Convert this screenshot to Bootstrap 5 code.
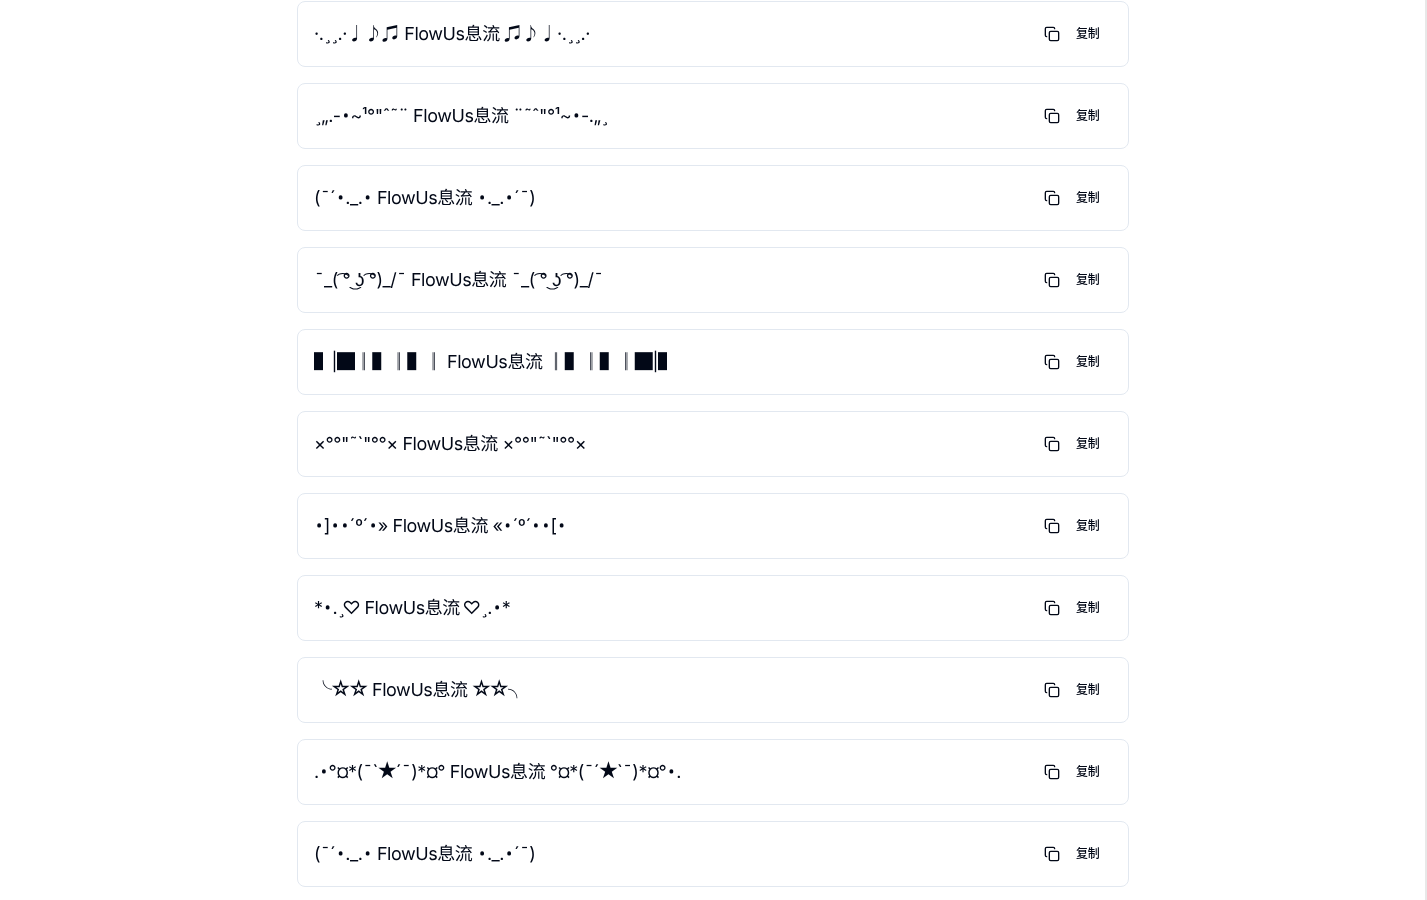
<!DOCTYPE html>
<html lang="zh-CN">
<head>
    <meta charset="UTF-8">
    <meta name="viewport" content="width=device-width, initial-scale=1.0">
    <title>FlowUs息流</title>
    <link href="https://cdn.jsdelivr.net/npm/bootstrap@5.3.0/dist/css/bootstrap.min.css" rel="stylesheet">
    <style>
        html, body { height: 900px; overflow: hidden; }
        body { background: #fff; color: #020817; font-family: Inter, "Noto Sans CJK SC", "DejaVu Sans", sans-serif; border-right: 2px solid #e8e8e8; text-rendering: geometricPrecision; }
        .page-list { width: 832px; margin-left: 297px; padding-top: 1px; will-change: transform; }
        .text-row { height: 66px; border: 1px solid #e2e8f0; border-radius: 8px; padding: 0 16px; background: #fff; color: #020817; }
        .text-row-label { font-size: 18px; line-height: 28px; letter-spacing: -0.45px; white-space: nowrap; padding-top: 1px; }
        .glyph-bullet { font-family: "Open Sans", sans-serif; padding: 0 1.75px; }
        .glyph-cedilla { font-family: "DejaVu Sans", sans-serif; letter-spacing: -2px; }
        .glyph-macron { padding: 0 .9px; }
        .glyph-star { font-size: 20.5px; line-height: 1; letter-spacing: -2px; margin-left: -1.5px; }
        .glyph-heart { letter-spacing: -0.75px; margin-left: -2px; }
        .glyph-currency { letter-spacing: -1.5px; }
        .copy-btn { width: 87px; height: 40px; padding: 0 12.6px 0 0; border: 0; font-size: 12px; line-height: 16px; letter-spacing: -0.3px; color: #020817; font-weight: 500; }
        .copy-btn svg { width: 16px; height: 16px; }
    </style>
</head>
<body>
    <div id="text-list" class="page-list d-flex flex-column gap-3"></div>

    <script>
        const myTexts = [
            "·.¸¸.·♩♪♫ FlowUs息流 ♫♪♩·.¸¸.·",
            "¸„.-•~¹°\"ˆ˜¨ FlowUs息流 ¨˜ˆ\"°¹~•-.„¸",
            "(¯´•._.• FlowUs息流 •._.•´¯)",
            "¯_( ͡° ͜ʖ ͡°)_/¯ FlowUs息流 ¯_( ͡° ͜ʖ ͡°)_/¯",
            "▌|█║▌║▌║ FlowUs息流 ║▌║▌║█|▌",
            "×°°\"˜`\"°°× FlowUs息流 ×°°\"˜`\"°°×",
            "•]••´º´•» FlowUs息流 «•´º´••[•",
            "*•.¸♡ FlowUs息流 ♡¸.•*",
            "╰☆☆ FlowUs息流 ☆☆╮",
            ".•°¤*(¯`★´¯)*¤° FlowUs息流 °¤*(¯´★`¯)*¤°•.",
            "(¯´•._.• FlowUs息流 •._.•´¯)"
        ];

        // a few symbols need another font or width to match
        function wrapGlyphs(text) {
            return text
                .replace(/•/g, '<span class="glyph-bullet">•</span>')
                .replace(/¸/g, '<span class="glyph-cedilla">¸</span>')
                .replace(/¯/g, '<span class="glyph-macron">¯</span>')
                .replace(/♡/g, '<span class="glyph-heart">♡</span>')
                .replace(/¤/g, '<span class="glyph-currency">¤</span>')
                .replace(/[☆★]/g, '<span class="glyph-star">$&</span>');
        }

        const copyIcon = '<svg viewBox="0 0 24 24" fill="none" stroke="currentColor" stroke-width="2" stroke-linecap="round" stroke-linejoin="round"><rect x="8" y="8" width="14" height="14" rx="2"/><path d="M4 16c-1.1 0-2-.9-2-2V4c0-1.1.9-2 2-2h10c1.1 0 2 .9 2 2"/></svg>';
        const textList = document.getElementById('text-list');

        myTexts.forEach(text => {
            const row = document.createElement('div');
            row.className = 'text-row d-flex align-items-center justify-content-between';
            const label = document.createElement('span');
            label.className = 'text-row-label';
            label.innerHTML = wrapGlyphs(text);
            const btn = document.createElement('button');
            btn.className = 'btn copy-btn d-flex align-items-center justify-content-end gap-3';
            btn.innerHTML = copyIcon + '<span>复制</span>';
            row.append(label, btn);
            textList.appendChild(row);
        });
    </script>
    <script src="https://cdn.jsdelivr.net/npm/bootstrap@5.3.0/dist/js/bootstrap.bundle.min.js"></script>
</body>
</html>
